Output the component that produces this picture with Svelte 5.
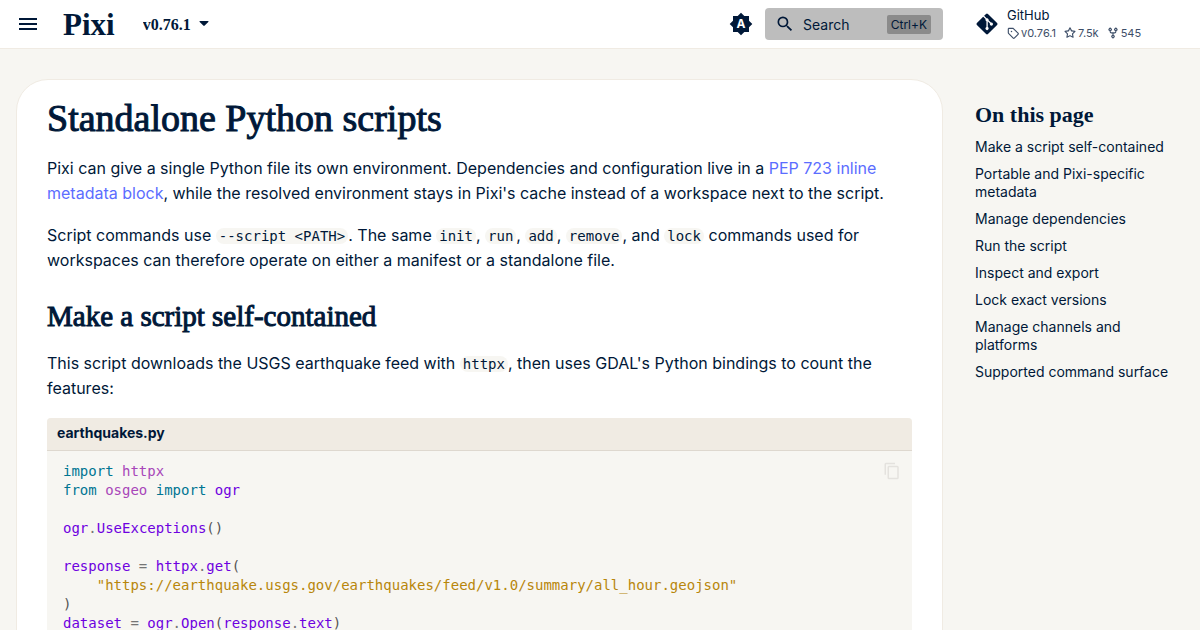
<script>
  const versions = ['v0.76.1'];
  let version = versions[0];
  let query = '';

  const facts = [
    {
      label: 'v0.76.1',
      icon: 'M1 7.775V2.75C1 1.784 1.784 1 2.75 1h5.025c.464 0 .91.184 1.238.513l6.25 6.25a1.75 1.75 0 0 1 0 2.474l-5.026 5.026a1.75 1.75 0 0 1-2.474 0l-6.25-6.25A1.752 1.752 0 0 1 1 7.775Zm1.5 0c0 .066.026.13.073.177l6.25 6.25a.25.25 0 0 0 .354 0l5.025-5.025a.25.25 0 0 0 0-.354l-6.25-6.25a.25.25 0 0 0-.177-.073H2.75a.25.25 0 0 0-.25.25ZM6 5a1 1 0 1 1 0 2 1 1 0 0 1 0-2Z'
    },
    {
      label: '7.5k',
      icon: 'M8 .25a.75.75 0 0 1 .673.418l1.882 3.815 4.21.612a.75.75 0 0 1 .416 1.279l-3.046 2.97.719 4.192a.751.751 0 0 1-1.088.791L8 12.347l-3.766 1.98a.75.75 0 0 1-1.088-.79l.72-4.194L.818 6.374a.75.75 0 0 1 .416-1.28l4.21-.611L7.327.668A.75.75 0 0 1 8 .25Zm0 2.445L6.615 5.5a.75.75 0 0 1-.564.41l-3.097.45 2.24 2.184a.75.75 0 0 1 .216.664l-.528 3.084 2.769-1.456a.75.75 0 0 1 .698 0l2.77 1.456-.53-3.084a.75.75 0 0 1 .216-.664l2.24-2.183-3.096-.45a.75.75 0 0 1-.564-.41L8 2.694Z'
    },
    {
      label: '545',
      icon: 'M5 5.372v.878c0 .414.336.75.75.75h4.5a.75.75 0 0 0 .75-.75v-.878a2.25 2.25 0 1 1 1.5 0v.878a2.25 2.25 0 0 1-2.25 2.25h-1.5v2.128a2.251 2.251 0 1 1-1.5 0V8.5h-1.5A2.25 2.25 0 0 1 3.5 6.25v-.878a2.25 2.25 0 1 1 1.5 0ZM5 3.25a.75.75 0 1 0-1.5 0 .75.75 0 0 0 1.5 0Zm6.75.75a.75.75 0 1 0 0-1.5.75.75 0 0 0 0 1.5Zm-3 8.75a.75.75 0 1 0-1.5 0 .75.75 0 0 0 1.5 0Z'
    }
  ];

  const toc = [
    'Make a script self-contained',
    'Portable and Pixi-specific metadata',
    'Manage dependencies',
    'Run the script',
    'Inspect and export',
    'Lock exact versions',
    'Manage channels and platforms',
    'Supported command surface'
  ];

  // [token class, text] pairs, one array per line
  const code = [
    [['k', 'import'], ['w', ' '], ['nn', 'httpx']],
    [['k', 'from'], ['w', ' '], ['nn', 'osgeo'], ['w', ' '], ['k', 'import'], ['w', ' '], ['n', 'ogr']],
    [],
    [['n', 'ogr'], ['o', '.'], ['n', 'UseExceptions'], ['p', '()']],
    [],
    [['n', 'response'], ['o', ' = '], ['n', 'httpx'], ['o', '.'], ['n', 'get'], ['p', '(']],
    [['w', '    '], ['s', '"https://earthquake.usgs.gov/earthquakes/feed/v1.0/summary/all_hour.geojson"']],
    [['p', ')']],
    [['n', 'dataset'], ['o', ' = '], ['n', 'ogr'], ['o', '.'], ['n', 'Open'], ['p', '('], ['n', 'response'], ['o', '.'], ['n', 'text'], ['p', ')']]
  ];

  const slug = (title) => '#' + title.toLowerCase().replaceAll(' ', '-');
  const source = code.map((line) => line.map((token) => token[1]).join('')).join('\n');

  function copy() {
    navigator.clipboard.writeText(source);
  }
</script>

<header class="header">
  <div class="bar">
    <button class="icon-btn" aria-label="Menu">
      <svg viewBox="0 0 24 24"><path d="M3 6h18v2H3V6m0 5h18v2H3v-2m0 5h18v2H3v-2Z" /></svg>
    </button>
    <a class="brand" href="#home">Pixi</a>
    <label class="version">
      <select bind:value={version} aria-label="Version">
        {#each versions as v}
          <option>{v}</option>
        {/each}
      </select>
      <svg viewBox="0 0 10 6"><path d="M1 0h8q1 0 .3 1L5.7 4.6q-.7.7-1.4 0L.7 1Q0 0 1 0Z" /></svg>
    </label>
    <button class="icon-btn theme" aria-label="Switch theme">
      <svg viewBox="0 0 24 24">
        <path d="M20 8.69V4h-4.69L12 .69 8.69 4H4v4.69L.69 12 4 15.31V20h4.69L12 23.31 15.31 20H20v-4.69L23.31 12Z" />
        <text x="12" y="16" text-anchor="middle">A</text>
      </svg>
    </button>
    <label class="search">
      <svg viewBox="0 0 24 24"><path d="M9.5 3A6.5 6.5 0 0 1 16 9.5c0 1.61-.59 3.09-1.56 4.23l.27.27h.79l5 5-1.5 1.5-5-5v-.79l-.27-.27A6.516 6.516 0 0 1 9.5 16 6.5 6.5 0 0 1 3 9.5 6.5 6.5 0 0 1 9.5 3m0 2C7 5 5 7 5 9.5S7 14 9.5 14 14 12 14 9.5 12 5 9.5 5Z" /></svg>
      <input type="text" placeholder="Search" aria-label="Search" bind:value={query} />
      <kbd>Ctrl+K</kbd>
    </label>
  </div>
  <a class="source" href="#github">
    <svg class="git" viewBox="0 0 448 512"><path d="M439.55 236.05 244 40.45a28.87 28.87 0 0 0-40.81 0l-40.66 40.63 51.52 51.52c27.06-9.14 52.68 16.77 43.39 43.68l49.66 49.66c34.23-11.8 61.18 31 35.47 56.69-26.49 26.49-70.21-2.87-56-37.34L240.22 199v121.85c25.3 12.54 22.26 41.85 9.08 55a34.34 34.34 0 0 1-48.55 0c-17.57-17.6-11.07-46.91 11.25-56v-123c-20.8-8.51-24.6-30.74-18.64-45L142.57 101 8.45 235.14a28.86 28.86 0 0 0 0 40.81l195.61 195.6a28.86 28.86 0 0 0 40.8 0l194.69-194.69a28.86 28.86 0 0 0 0-40.81z" /></svg>
    <div>
      <div class="repo">GitHub</div>
      <ul class="facts">
        {#each facts as fact}
          <li>
            <svg viewBox="0 0 16 16"><path d={fact.icon} /></svg>
            {fact.label}
          </li>
        {/each}
      </ul>
    </div>
  </a>
</header>

<div class="page">
  <main class="article">
    <h1>Standalone Python scripts</h1>
    <p>
      Pixi can give a single Python file its own environment. Dependencies and configuration live in a
      <a href="#pep-723">PEP 723 inline metadata block</a>, while the resolved environment stays in
      Pixi's cache instead of a workspace next to the script.
    </p>
    <p>
      Script commands use <code>--script &lt;PATH&gt;</code>. The same <code>init</code>,
      <code>run</code>, <code>add</code>, <code>remove</code>, and <code>lock</code> commands used for
      workspaces can therefore operate on either a manifest or a standalone file.
    </p>

    <h2 id="make-a-script-self-contained">Make a script self-contained</h2>
    <p>
      This script downloads the USGS earthquake feed with <code>httpx</code>, then uses GDAL's Python
      bindings to count the features:
    </p>

    <figure class="listing">
      <figcaption>earthquakes.py</figcaption>
      <div class="listing-body">
        <pre>{#each code as line}<span class="line">{#each line as [type, text]}<span class={type}>{text}</span>{/each}</span>{/each}</pre>
        <button class="copy" aria-label="Copy to clipboard" on:click={copy}>
          <svg viewBox="0 0 24 24"><path d="M19 21H8V7h11m0-2H8a2 2 0 0 0-2 2v14a2 2 0 0 0 2 2h11a2 2 0 0 0 2-2V7a2 2 0 0 0-2-2m-3-4H4a2 2 0 0 0-2 2v14h2V3h12V1Z" /></svg>
        </button>
      </div>
    </figure>
  </main>

  <nav class="toc" aria-labelledby="toc-title">
    <h3 id="toc-title">On this page</h3>
    <ul>
      {#each toc as title}
        <li><a href={slug(title)}>{title}</a></li>
      {/each}
    </ul>
  </nav>
</div>

<style>
  :global(body) {
    margin: 0;
    background: #f7f6f2;
    color: #001838;
    font-family: Inter, sans-serif;
    font-size: 16px;
    line-height: 25px;
  }

  button,
  input,
  select {
    padding: 0;
    border: none;
    background: none;
    color: inherit;
    font-family: inherit;
  }

  button,
  select {
    cursor: pointer;
  }

  a {
    color: inherit;
    text-decoration: none;
  }

  ul {
    margin: 0;
    padding: 0;
    list-style: none;
  }

  svg {
    display: block;
    flex: none;
    fill: currentColor;
  }

  .header,
  .page {
    display: grid;
    grid-template-columns: minmax(0, 1fr) 225px;
    gap: 32px;
    padding-left: 16px;
  }

  .header {
    height: 48px;
    background: white;
    border-bottom: 1px solid #f0ebe3;
  }

  .bar {
    display: flex;
    align-items: center;
  }

  .icon-btn svg {
    width: 24px;
    height: 24px;
  }

  .brand {
    margin-left: 23px;
    font-family: 'Liberation Serif', serif;
    font-size: 31px;
    font-weight: 700;
  }

  .version {
    display: flex;
    align-items: center;
    gap: 8px;
    margin: 0 auto 0 28px;
  }

  .version select {
    appearance: none;
    font-family: 'Liberation Serif', serif;
    font-size: 16px;
    font-weight: 700;
  }

  .version svg {
    width: 10px;
    height: 6px;
  }

  .theme text {
    fill: white;
    font-size: 12px;
    font-weight: 700;
  }

  .search {
    display: flex;
    align-items: center;
    box-sizing: border-box;
    width: 178px;
    height: 32px;
    margin-left: 12px;
    padding: 0 12px 0 10px;
    border-radius: 4px;
    background: #bdbdbd;
  }

  .search svg {
    width: 20px;
    height: 20px;
  }

  .search input {
    flex: 1;
    min-width: 0;
    margin-left: 8px;
    font-size: 14px;
    outline: none;
  }

  .search input::placeholder {
    color: #001838;
    opacity: 1;
  }

  .search kbd {
    padding: 0 4px;
    border-radius: 2px;
    background: #8b8b8b;
    font-family: inherit;
    font-size: 12px;
    line-height: 19px;
  }

  .source {
    display: flex;
    align-items: center;
    gap: 8px;
  }

  .git {
    width: 24px;
    height: 24px;
  }

  .repo {
    font-size: 13px;
    line-height: 18px;
  }

  .facts {
    display: flex;
    gap: 8px;
    color: #3d4e68;
    font-size: 11px;
    line-height: 18px;
  }

  .facts li {
    display: flex;
    align-items: center;
    gap: 2px;
  }

  .facts svg {
    width: 12px;
    height: 12px;
  }

  .page {
    align-items: start;
    padding-top: 30px;
  }

  .article {
    padding: 17px 30px 30px;
    background: white;
    border: 1px solid #f0ebe3;
    border-radius: 32px;
  }

  h1,
  h2,
  h3 {
    margin: 0;
    font-family: 'Liberation Serif', serif;
    font-weight: 400;
  }

  h1,
  h2 {
    -webkit-text-stroke: 1px currentColor;
  }

  h1 {
    margin-bottom: 17px;
    font-size: 38px;
    line-height: 42px;
  }

  h2 {
    margin: 25px 0 17px;
    font-size: 29px;
    line-height: 36px;
  }

  p {
    margin: 0 0 17px;
  }

  p a {
    color: #5b6dff;
  }

  code,
  pre {
    font-family: 'DejaVu Sans Mono', monospace;
    font-size: 14px;
  }

  code {
    padding: 0 3px;
    border-radius: 10px;
    background: #f7f6f2;
    line-height: 18px;
  }

  .listing {
    margin: 0;
    border-radius: 4px;
    background: #f7f6f2;
    overflow: hidden;
  }

  figcaption {
    padding: 3px 10px 5px;
    border-bottom: 1px solid #ded8cf;
    background: #f0ebe3;
    font-size: 14px;
    font-weight: 700;
    line-height: 24px;
  }

  .listing-body {
    display: flex;
    align-items: flex-start;
    padding: 11px 11px 11px 16px;
  }

  pre {
    flex: 1;
    min-width: 0;
    margin: 0;
    line-height: 19px;
  }

  .line {
    display: block;
    min-height: 19px;
  }

  .copy {
    color: #e4e2de;
  }

  .copy svg {
    width: 18px;
    height: 18px;
  }

  .k {
    color: #007592;
  }

  .nn {
    color: #a846b9;
  }

  .n {
    color: #6e00e0;
  }

  .o {
    color: #757575;
  }

  .p {
    color: #545454;
  }

  .s {
    color: #b8860b;
  }

  .toc {
    padding: 21px 16px 0 0;
  }

  h3 {
    margin-bottom: 8px;
    font-size: 22px;
    font-weight: 700;
    line-height: 30px;
  }

  .toc li {
    margin-bottom: 9px;
    font-size: 14px;
    line-height: 18px;
  }

  @media (max-width: 768px) {
    .header,
    .page {
      grid-template-columns: minmax(0, 1fr);
      padding-right: 16px;
    }

    .source,
    .toc {
      display: none;
    }
  }
</style>
